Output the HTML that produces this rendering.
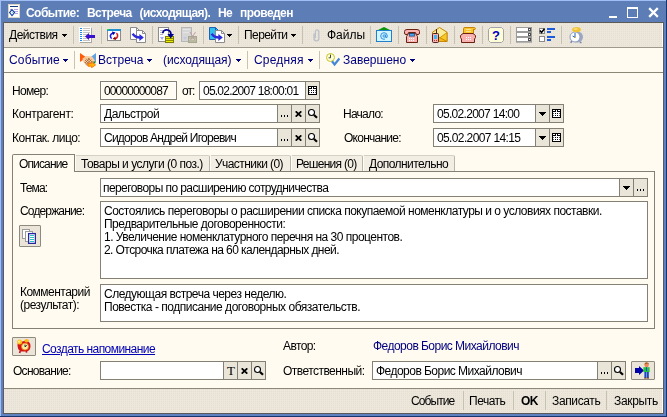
<!DOCTYPE html>
<html><head><meta charset="utf-8">
<style>
*{box-sizing:border-box;margin:0;padding:0}
html,body{width:667px;height:417px;overflow:hidden;background:#5c7fc0}
body{position:relative;font-family:"Liberation Sans",sans-serif;font-size:11px;color:#000;line-height:13px}
.a{position:absolute;white-space:nowrap}
.t{font-size:12px;line-height:13px;letter-spacing:-0.5px;will-change:transform}
.blue{color:#000080}
.fld{border:1px solid #848074}
.btn{background:#eae5d9;border:1px solid #848074;width:15px}
.sep{width:1px;height:18px;background:#c6c2b2}
.arr{width:0;height:0;border-left:3px solid transparent;border-right:3px solid transparent;border-top:3px solid #000}
.hl{height:1px}
.dith{background:#eae4d9 conic-gradient(#e4ded3 25%,#ece6db 0) 0 0/2px 2px}
</style></head><body>
<div class="a" style="left:0;top:0;width:667px;height:417px;background:#5e81c0"></div>
<div class="a" style="left:1px;top:22px;width:2px;height:392px;background:#5e80c2"></div>
<div class="a" style="left:1px;top:1px;width:665px;height:21px;background:#5c7db5"></div>
<div class="a" style="left:0;top:0;width:667px;height:1px;background:#a0bef5"></div>
<div class="a" style="left:0;top:0;width:1px;height:417px;background:#a0bef5"></div>
<div class="a" style="left:666px;top:0;width:1px;height:417px;background:#17356f"></div>
<div class="a" style="left:0;top:416px;width:667px;height:1px;background:#17356f"></div>
<div class="a" style="left:3px;top:22px;width:661px;height:392px;background:#5a5a58"></div>
<div class="a" style="left:26px;top:6px;font-weight:bold;font-size:12px;color:#fff;line-height:15px;letter-spacing:-0.55px;word-spacing:5px;will-change:transform">Событие: Встреча (исходящая). Не проведен</div>
<div class="a dith" style="left:4px;top:23px;width:659px;height:24px"></div>
<div class="a hl" style="left:4px;top:47px;width:659px;background:#9d9a8c"></div>
<div class="a" style="left:4px;top:48px;width:659px;height:24px;background:#fffbf0"></div>
<div class="a hl" style="left:4px;top:72px;width:659px;background:#8c8878"></div>
<div class="a" style="left:4px;top:73px;width:659px;height:315px;background:#fffbf0"></div>
<div class="a hl" style="left:4px;top:388px;width:659px;background:#8c8878"></div>
<div class="a dith" style="left:4px;top:389px;width:659px;height:24px"></div>
<div class="a" style="left:662px;top:23px;width:1px;height:390px;background:#fff"></div>
<div class="a hl" style="left:4px;top:47px;width:659px;background:#9d9a8c"></div>
<div class="a hl" style="left:4px;top:72px;width:659px;background:#8c8878"></div>
<div class="a hl" style="left:4px;top:388px;width:659px;background:#8c8878"></div>
<svg class="a" style="left:8px;top:4px" width="12" height="14" viewBox="0 0 12 14" shape-rendering="crispEdges"><rect x="0" y="0" width="12" height="14" fill="#dcd4c4"/><rect x="1" y="1" width="10" height="12" fill="#fff"/><rect x="2" y="2" width="8" height="1" fill="#104080"/><rect x="6" y="5" width="4" height="1" fill="#b0a0e0"/><rect x="6" y="7" width="4" height="1" fill="#b0a0e0"/><rect x="7" y="9" width="3" height="1" fill="#b0a0e0"/><rect x="2" y="5" width="2" height="1" fill="#b0a0e0"/><path d="M4 5.6L6.6 8.6L4 11.6L1.6 8.6Z" fill="#fff" stroke="#1040a0" stroke-width="1.1" shape-rendering="geometricPrecision"/><rect x="4" y="8" width="1" height="1" fill="#60d0f0"/></svg>
<svg class="a" style="left:609px;top:16px" width="8" height="2" viewBox="0 0 8 2" shape-rendering="crispEdges"><rect x="0" y="0" width="8" height="2" fill="#fff"/></svg>
<svg class="a" style="left:627px;top:7px" width="11" height="11" viewBox="0 0 11 11" shape-rendering="crispEdges"><path d="M0 0h11v11h-11zM1 2v8h9v-8z" fill="#fff" fill-rule="evenodd"/></svg>
<svg class="a" style="left:648px;top:7px" width="11" height="11" viewBox="0 0 11 11"><path d="M2 2L9 9M9 2L2 9" stroke="#fff" stroke-width="2.3" stroke-linecap="square" fill="none"/></svg>
<div class="a t " style="left:9px;top:29px;letter-spacing:-0.5px;">Действия</div>
<svg class="a" style="left:62px;top:34px" width="5" height="3" viewBox="0 0 5 3" shape-rendering="crispEdges"><path d="M0 0h5v1h-5zM1 1h3v1h-3zM2 2h1v1h-1z" fill="#000"/></svg>
<div class="a sep" style="left:73px;top:26px"></div>
<div class="a sep" style="left:101px;top:26px"></div>
<div class="a sep" style="left:152px;top:26px"></div>
<div class="a sep" style="left:203px;top:26px"></div>
<div class="a sep" style="left:238px;top:26px"></div>
<div class="a sep" style="left:302px;top:26px"></div>
<div class="a sep" style="left:370px;top:26px"></div>
<div class="a sep" style="left:398px;top:26px"></div>
<div class="a sep" style="left:426px;top:26px"></div>
<div class="a sep" style="left:454px;top:26px"></div>
<div class="a sep" style="left:482px;top:26px"></div>
<div class="a sep" style="left:510px;top:26px"></div>
<div class="a sep" style="left:561px;top:26px"></div>
<svg class="a" style="left:79px;top:27px" width="17" height="16" viewBox="0 0 17 16" shape-rendering="crispEdges"><rect x="1" y="1" width="12" height="15" fill="#a8a8a0"/><rect x="0" y="0" width="12" height="15" fill="#fff"/><rect x="1" y="1" width="2" height="1" fill="#2090e8"/><rect x="4" y="1" width="7" height="1" fill="#c4c4c4"/><rect x="1" y="3" width="2" height="1" fill="#2090e8"/><rect x="4" y="3" width="7" height="1" fill="#c4c4c4"/><rect x="1" y="5" width="2" height="1" fill="#2090e8"/><rect x="4" y="5" width="7" height="1" fill="#c4c4c4"/><rect x="1" y="7" width="2" height="1" fill="#2090e8"/><rect x="4" y="7" width="7" height="1" fill="#c4c4c4"/><rect x="1" y="9" width="2" height="1" fill="#2090e8"/><rect x="4" y="9" width="7" height="1" fill="#c4c4c4"/><rect x="1" y="11" width="2" height="1" fill="#2090e8"/><rect x="4" y="11" width="7" height="1" fill="#c4c4c4"/><rect x="1" y="13" width="2" height="1" fill="#2090e8"/><rect x="4" y="13" width="7" height="1" fill="#c4c4c4"/><path d="M6 9.5L10 6V8H16V11H10V13Z" fill="#3a10d0" shape-rendering="geometricPrecision"/></svg>
<svg class="a" style="left:107px;top:29px" width="14" height="12" viewBox="0 0 14 12" shape-rendering="crispEdges"><rect x="0" y="0" width="14" height="12" fill="#8c8c8c"/><rect x="1" y="1" width="12" height="10" fill="#fff"/><rect x="0" y="0" width="14" height="2" fill="#2090d0"/><rect x="0" y="0" width="2" height="1" fill="#20e020"/><g shape-rendering="geometricPrecision"><path d="M4.6 9.6C2.6 8 3 4.8 6 4" stroke="#1818e8" stroke-width="1.6" fill="none"/><path d="M5 2.6L8.6 3.4L6 6.2Z" fill="#0000a0"/><path d="M9.4 4.2C11.4 5.8 11 8.8 8 9.8" stroke="#d02020" stroke-width="1.6" fill="none"/><path d="M9 11L5.6 10L8.2 7.6Z" fill="#800000"/></g></svg>
<svg class="a" style="left:130px;top:27px" width="16" height="16" viewBox="0 0 16 16"><path d="M0.5 0.5H6.5L9.5 3.5V12.5H0.5Z" fill="#fff" stroke="#8c8c8c"/><path d="M6.5 0.5V3.5H9.5" fill="none" stroke="#8c8c8c"/><path d="M6.5 3.5H12.5L15.5 6.5V15.5H6.5Z" fill="#fff" stroke="#8c8c8c"/><path d="M12.5 3.5V6.5H15.5" fill="none" stroke="#8c8c8c"/><path d="M2.6 6.8C4.5 9.5 6 10.5 10 10.5" stroke="#2c2cd8" stroke-width="2.4" fill="none"/><path d="M9.4 7L13.8 10.5L9.4 14Z" fill="#2c2cd8"/></svg>
<svg class="a" style="left:158px;top:27px" width="17" height="16" viewBox="0 0 17 16"><rect x="0.5" y="0.5" width="10" height="14" fill="#fff" stroke="#8c8c8c"/><rect x="2" y="3" width="4" height="1" fill="#b8b8b8"/><rect x="2" y="5" width="4" height="1" fill="#b8b8b8"/><rect x="2" y="7" width="3" height="1" fill="#b8b8b8"/><path d="M2 10H6L4 13Z" fill="#a8a8ff"/><rect x="7.5" y="9.5" width="8" height="6" fill="#ecec00" stroke="#7c7c00"/><rect x="8" y="11" width="7" height="1" fill="#8c8c00"/><rect x="8" y="13" width="7" height="1" fill="#8c8c00"/><path d="M4.8 6.2C5 2 12.4 1.2 13 7.4" stroke="#000090" stroke-width="1.8" fill="none"/><path d="M9.4 7H16L12.7 11.4Z" fill="#000090"/></svg>
<svg class="a" style="left:181px;top:27px" width="17" height="16" viewBox="0 0 17 16"><rect x="0.5" y="0.5" width="10" height="14" fill="#d6d6d6" stroke="#b6b6b6"/><rect x="2" y="2" width="7" height="1" fill="#e4e4e4"/><rect x="2" y="5" width="6" height="1" fill="#e4e4e4"/><path d="M2 10H6L4 13Z" fill="#c4c8e0"/><rect x="7.5" y="9.5" width="8" height="6" fill="#babaa2" stroke="#a8a890"/><rect x="8" y="12" width="7" height="1" fill="#cfcfba"/><path d="M9 5L14 13M14.5 5L9.5 13" stroke="#b89aa0" stroke-width="0.9" fill="none"/></svg>
<svg class="a" style="left:209px;top:27px" width="16" height="16" viewBox="0 0 16 16"><path d="M0.5 0.5H6.5L9.5 3.5V12.5H0.5Z" fill="#30c0f0" stroke="#2060b0"/><path d="M6.5 0.5V3.5H9.5" fill="none" stroke="#2060b0"/><path d="M6.5 3.5H12.5L15.5 6.5V15.5H6.5Z" fill="#fff" stroke="#8c8c8c"/><path d="M12.5 3.5V6.5H15.5" fill="none" stroke="#8c8c8c"/><path d="M2.6 6.8C4.5 9.5 6 10.5 10 10.5" stroke="#2c2cd8" stroke-width="2.4" fill="none"/><path d="M9.4 7L13.8 10.5L9.4 14Z" fill="#2c2cd8"/></svg>
<svg class="a" style="left:227px;top:34px" width="5" height="3" viewBox="0 0 5 3" shape-rendering="crispEdges"><path d="M0 0h5v1h-5zM1 1h3v1h-3zM2 2h1v1h-1z" fill="#000"/></svg>
<div class="a t " style="left:244px;top:29px;letter-spacing:-0.58px;">Перейти</div>
<svg class="a" style="left:291px;top:34px" width="5" height="3" viewBox="0 0 5 3" shape-rendering="crispEdges"><path d="M0 0h5v1h-5zM1 1h3v1h-3zM2 2h1v1h-1z" fill="#000"/></svg>
<svg class="a" style="left:313px;top:29px" width="7" height="13" viewBox="0 0 7 13"><path d="M1 4.5V9.5a2.4 2.4 0 0 0 4.8 0V2.6a1.7 1.7 0 0 0 -3.4 0V9.2" stroke="#bcc0ca" stroke-width="1.3" fill="none"/></svg>
<div class="a t " style="left:327px;top:29px;letter-spacing:0.0px;">Файлы</div>
<svg class="a" style="left:376px;top:27px" width="16" height="15" viewBox="0 0 16 15"><path d="M1 3.6L8 0L15 3.6Z" fill="#0c940c"/><rect x="0.5" y="3.5" width="15" height="11" fill="#d2f5ff" stroke="#2080d0"/><circle cx="8" cy="9" r="3.3" fill="none" stroke="#3090e0" stroke-width="1"/><circle cx="8.2" cy="9" r="1.2" fill="none" stroke="#3090e0" stroke-width="1"/><path d="M9.6 7.6V10.4H11" stroke="#3090e0" fill="none"/><rect x="9" y="11" width="3" height="2" fill="#d2f5ff"/></svg>
<svg class="a" style="left:404px;top:29px" width="16" height="14" viewBox="0 0 16 14"><path d="M2.5 13.5V7.5L4.5 4.5H11.5L13.5 7.5V13.5Z" fill="#f8b2b2" stroke="#6c2010"/><path d="M0.5 4V2.5Q0.5 0.5 3 0.5H13Q15.5 0.5 15.5 2.5V4Q15.5 5.5 14 5.5H12.5L11.5 3.5H4.5L3.5 5.5H2Q0.5 5.5 0.5 4Z" fill="#f8b2b2" stroke="#6c2010"/><rect x="5.5" y="4.5" width="5" height="2.6" fill="#48a8f4" stroke="#204878" stroke-width="0.8"/><rect x="5" y="9" width="1" height="1" fill="#fff"/><rect x="5" y="11" width="1" height="1" fill="#fff"/><rect x="7" y="9" width="1" height="1" fill="#fff"/><rect x="7" y="11" width="1" height="1" fill="#fff"/><rect x="9" y="9" width="1" height="1" fill="#fff"/><rect x="9" y="11" width="1" height="1" fill="#fff"/></svg>
<svg class="a" style="left:432px;top:27px" width="16" height="16" viewBox="0 0 16 16"><path d="M0.5 5.2L7.5 0.5L15 5.2V14.5H0.5Z" fill="#f8ec98" stroke="#c48400"/><path d="M15 5.5L7.5 11L15 14.5Z" fill="#f8c828" stroke="#c48400" stroke-width="0.8"/><path d="M0.5 14.5L7.5 10.6L15 14.5Z" fill="#f8b818" stroke="#c48400" stroke-width="0.8"/><rect x="4" y="2" width="1" height="5" fill="#502020"/><rect x="0.5" y="6.5" width="6" height="9" rx="1" fill="#f8b2b2" stroke="#502020"/><rect x="2" y="8" width="3" height="4" fill="#40b4f8"/><rect x="2" y="13" width="1" height="1" fill="#a04040"/><rect x="4" y="13" width="1" height="1" fill="#a04040"/></svg>
<svg class="a" style="left:460px;top:27px" width="17" height="16" viewBox="0 0 17 16"><path d="M3.5 6.5V1.5Q3.5 0.5 5 0.5H14.5Q16 1 15 2.5Q14 3 13.5 2V6.5Z" fill="#f8c432" stroke="#c48400"/><rect x="6" y="2" width="5" height="1" fill="#fbe28a"/><rect x="6" y="4" width="5" height="1" fill="#fbe28a"/><path d="M1.5 15.5V12L0.5 10.5V8.5L3 6.5H13L15.5 8.5V10.5L14.5 12V15.5Z" fill="#f8b2b2" stroke="#6c2010"/><rect x="6" y="10" width="1" height="1" fill="#fff"/><rect x="6" y="12" width="1" height="1" fill="#fff"/><rect x="8" y="10" width="1" height="1" fill="#fff"/><rect x="8" y="12" width="1" height="1" fill="#fff"/><rect x="10" y="10" width="1" height="1" fill="#fff"/><rect x="10" y="12" width="1" height="1" fill="#fff"/></svg>
<svg class="a" style="left:488px;top:27px" width="16" height="16" viewBox="0 0 16 16"><path d="M2.5 0.5H13.5L15.5 2.5V13.5L13.5 15.5H2.5L0.5 13.5V2.5Z" fill="#fffdd6" stroke="#a2a2aa"/><text x="8" y="13" text-anchor="middle" font-family="Liberation Sans, sans-serif" font-weight="bold" font-size="13" fill="#0000c0">?</text></svg>
<svg class="a" style="left:516px;top:27px" width="16" height="16" viewBox="0 0 16 16" shape-rendering="crispEdges"><rect x="0" y="0" width="16" height="5" fill="#9c9c9c"/><rect x="1" y="1" width="11" height="3" fill="#fff"/><rect x="12" y="1" width="3" height="3" fill="#505050"/><rect x="13" y="2" width="1" height="1" fill="#fff"/><rect x="0" y="5" width="16" height="5" fill="#9c9c9c"/><rect x="1" y="6" width="11" height="3" fill="#fff"/><rect x="12" y="6" width="3" height="3" fill="#505050"/><rect x="13" y="7" width="1" height="1" fill="#fff"/><rect x="0" y="10" width="16" height="5" fill="#9c9c9c"/><rect x="1" y="11" width="11" height="3" fill="#fff"/><rect x="12" y="11" width="3" height="3" fill="#505050"/><rect x="13" y="12" width="1" height="1" fill="#fff"/><rect x="0" y="15" width="16" height="1" fill="#b4b4b4"/></svg>
<svg class="a" style="left:539px;top:28px" width="16" height="14" viewBox="0 0 16 14" shape-rendering="crispEdges"><rect x="0" y="0" width="6" height="6" fill="#8a8a8a"/><rect x="1" y="1" width="4" height="4" fill="#fff"/><rect x="0" y="8" width="6" height="6" fill="#8a8a8a"/><rect x="1" y="9" width="4" height="4" fill="#fff"/><path d="M1 2.5L2.5 4.5L5.5 0.8" stroke="#000" stroke-width="1.5" fill="none" shape-rendering="geometricPrecision"/><rect x="8" y="0" width="8" height="2" fill="#1c5cdc"/><rect x="8" y="3" width="4" height="2" fill="#1c5cdc"/><rect x="8" y="8" width="8" height="2" fill="#1c5cdc"/><rect x="8" y="11" width="4" height="2" fill="#1c5cdc"/></svg>
<svg class="a" style="left:569px;top:27px" width="15" height="17" viewBox="0 0 15 17"><ellipse cx="8.5" cy="10" rx="5.5" ry="5.6" fill="#9aa8c4"/><path d="M3 14L1.6 15.8M11 15L12.4 16" stroke="#7080a8" stroke-width="1.4"/><circle cx="6" cy="10" r="5" fill="#fff" stroke="#8c9cc0" stroke-width="1"/><path d="M6 6V10.4L3.6 9" stroke="#2060c0" stroke-width="1" fill="none"/><rect x="5.5" y="9.8" width="1.2" height="1.2" fill="#e0b020"/><ellipse cx="7.5" cy="2.6" rx="4.4" ry="2.6" fill="#f0c436"/><ellipse cx="6.6" cy="2" rx="2" ry="1" fill="#f8dc78"/></svg>
<div class="a t blue" style="left:9px;top:54px;letter-spacing:0.17px">Событие</div>
<svg class="a" style="left:63px;top:59px" width="5" height="3" viewBox="0 0 5 3" shape-rendering="crispEdges"><path d="M0 0h5v1h-5zM1 1h3v1h-3zM2 2h1v1h-1z" fill="#00007c"/></svg>
<div class="a sep" style="left:74px;top:51px;background:#c8c4b0"></div>
<div class="a sep" style="left:247px;top:51px;background:#c8c4b0"></div>
<div class="a sep" style="left:319px;top:51px;background:#c8c4b0"></div>
<svg class="a" style="left:80px;top:53px" width="16" height="15" viewBox="0 0 16 15"><path d="M0 0L6.5 4.5L0 9Z" fill="#ff5a08"/><path d="M16 0L10 4.5L16 9.5Z" fill="#62a2e2"/><path d="M2.5 5.5L6.5 3L12 3.6L15 7.5L13 11L9 14.2L6 12.2L3 8.5Z" fill="#f8cc9c"/><path d="M5 7L9 11M6 5.6L10.6 10.2M8 5L12 9M4.6 9L8.4 12.8M5 10L9.6 5.4M6.4 11.4L11.4 6.4M8 12.6L12.6 8" stroke="#9a5828" stroke-width="0.7" fill="none"/><path d="M8.2 10.6H11.6V9L15.6 11.9L11.6 14.8V13.2H8.2Z" fill="#ffb400" stroke="#ff6a00" stroke-width="0.8"/><rect x="13.4" y="8.4" width="2" height="2" fill="#208020"/></svg>
<div class="a t blue" style="left:98px;top:54px;letter-spacing:0.0px;">Встреча</div>
<svg class="a" style="left:147px;top:59px" width="5" height="3" viewBox="0 0 5 3" shape-rendering="crispEdges"><path d="M0 0h5v1h-5zM1 1h3v1h-3zM2 2h1v1h-1z" fill="#00007c"/></svg>
<div class="a t blue" style="left:163px;top:54px;letter-spacing:-0.1px;">(исходящая)</div>
<svg class="a" style="left:236px;top:59px" width="5" height="3" viewBox="0 0 5 3" shape-rendering="crispEdges"><path d="M0 0h5v1h-5zM1 1h3v1h-3zM2 2h1v1h-1z" fill="#00007c"/></svg>
<div class="a t blue" style="left:254px;top:54px;letter-spacing:0.17px;">Средняя</div>
<svg class="a" style="left:308px;top:59px" width="5" height="3" viewBox="0 0 5 3" shape-rendering="crispEdges"><path d="M0 0h5v1h-5zM1 1h3v1h-3zM2 2h1v1h-1z" fill="#00007c"/></svg>
<svg class="a" style="left:326px;top:53px" width="14" height="14" viewBox="0 0 14 14"><circle cx="4.5" cy="4.5" r="4" fill="#ffffd4" stroke="#c4c428" stroke-width="1"/><path d="M4.5 1.6V4.8H2.6" stroke="#404040" stroke-width="1" fill="none"/><path d="M6 8.2L8.6 11.4L13.4 5.4" stroke="#4686d6" stroke-width="2.2" fill="none"/></svg>
<div class="a t blue" style="left:343px;top:54px;letter-spacing:0.0px;">Завершено</div>
<svg class="a" style="left:410px;top:59px" width="5" height="3" viewBox="0 0 5 3" shape-rendering="crispEdges"><path d="M0 0h5v1h-5zM1 1h3v1h-3zM2 2h1v1h-1z" fill="#00007c"/></svg>
<div class="a t " style="left:12px;top:85px;letter-spacing:-0.7px;">Номер:</div>
<div class="a t " style="left:12px;top:108px;letter-spacing:-0.35px;">Контрагент:</div>
<div class="a t " style="left:12px;top:132px;letter-spacing:-0.5px;">Контак. лицо:</div>
<div class="a fld" style="left:100px;top:81px;width:77px;height:19px;background:#fffbf0"><div class="a" style="left:0;top:0;right:0;bottom:0;border:1px solid #fff"></div></div>
<div class="a t " style="left:104px;top:85px;letter-spacing:-0.88px;">00000000087</div>
<div class="a t " style="left:182px;top:85px;letter-spacing:-1px">от:</div>
<div class="a fld" style="left:199px;top:81px;width:121px;height:19px;background:#fff"></div>
<div class="a t " style="left:203px;top:85px;letter-spacing:-0.78px;">05.02.2007 18:00:01</div>
<div class="a btn" style="left:305px;top:81px;height:19px"><svg class="a" style="left:2px;top:4px" width="9" height="9" viewBox="0 0 9 9" shape-rendering="crispEdges"><rect width="9" height="9" fill="#000"/><rect x="1" y="3" width="7" height="5" fill="#fff"/><path d="M1 1h2v1h-2zM4 1h1v2h-1zM6 1h2v1h-2z" fill="#fff"/><path d="M3 4h1v1h-1zM5 4h1v1h-1zM3 6h1v1h-1zM5 6h1v1h-1z" fill="#000"/><path d="M1 4h1v1h-1zM7 4h1v1h-1zM1 6h1v1h-1zM7 6h1v1h-1z" fill="#666"/></svg></div>
<div class="a fld" style="left:100px;top:104px;width:220px;height:19px;background:#fff"></div>
<div class="a t " style="left:104px;top:108px;letter-spacing:-0.5px;">Дальстрой</div>
<div class="a btn" style="left:277px;top:104px;height:19px"><div class="a" style="left:3px;top:10px;width:1px;height:2px;background:#000;box-shadow:3px 0 #000,6px 0 #000"></div></div>
<div class="a btn" style="left:291px;top:104px;height:19px"><svg class="a" style="left:3px;top:6px" width="7" height="6" viewBox="0 0 7 6"><path d="M0.7 0.3L6.3 5.7M6.3 0.3L0.7 5.7" stroke="#000" stroke-width="1.7" fill="none"/></svg></div>
<div class="a btn" style="left:305px;top:104px;height:19px"><svg class="a" style="left:1px;top:3px" width="12" height="12" viewBox="0 0 12 12"><circle cx="4.5" cy="4.5" r="3" stroke="#000" stroke-width="1.1" fill="#fff"/><path d="M7 7L10 9.7" stroke="#000" stroke-width="2.2" fill="none"/></svg></div>
<div class="a fld" style="left:100px;top:128px;width:220px;height:19px;background:#fff"></div>
<div class="a t " style="left:104px;top:132px;letter-spacing:-0.75px;">Сидоров Андрей Игоревич</div>
<div class="a btn" style="left:277px;top:128px;height:19px"><div class="a" style="left:3px;top:10px;width:1px;height:2px;background:#000;box-shadow:3px 0 #000,6px 0 #000"></div></div>
<div class="a btn" style="left:291px;top:128px;height:19px"><svg class="a" style="left:3px;top:6px" width="7" height="6" viewBox="0 0 7 6"><path d="M0.7 0.3L6.3 5.7M6.3 0.3L0.7 5.7" stroke="#000" stroke-width="1.7" fill="none"/></svg></div>
<div class="a btn" style="left:305px;top:128px;height:19px"><svg class="a" style="left:1px;top:3px" width="12" height="12" viewBox="0 0 12 12"><circle cx="4.5" cy="4.5" r="3" stroke="#000" stroke-width="1.1" fill="#fff"/><path d="M7 7L10 9.7" stroke="#000" stroke-width="2.2" fill="none"/></svg></div>
<div class="a t " style="left:343px;top:108px;letter-spacing:-0.75px;">Начало:</div>
<div class="a t " style="left:344px;top:132px;letter-spacing:-0.75px;">Окончание:</div>
<div class="a fld" style="left:433px;top:104px;width:131px;height:19px;background:#fff"></div>
<div class="a t " style="left:437px;top:108px;letter-spacing:-0.7px;">05.02.2007 14:00</div>
<div class="a btn" style="left:535px;top:104px;height:19px"><svg class="a" style="left:3px;top:7px" width="7" height="4" viewBox="0 0 7 4" shape-rendering="crispEdges"><path d="M0 0h7v1h-7zM1 1h5v1h-5zM2 2h3v1h-3zM3 3h1v1h-1z" fill="#000"/></svg></div>
<div class="a btn" style="left:549px;top:104px;height:19px"><svg class="a" style="left:2px;top:4px" width="9" height="9" viewBox="0 0 9 9" shape-rendering="crispEdges"><rect width="9" height="9" fill="#000"/><rect x="1" y="3" width="7" height="5" fill="#fff"/><path d="M1 1h2v1h-2zM4 1h1v2h-1zM6 1h2v1h-2z" fill="#fff"/><path d="M3 4h1v1h-1zM5 4h1v1h-1zM3 6h1v1h-1zM5 6h1v1h-1z" fill="#000"/><path d="M1 4h1v1h-1zM7 4h1v1h-1zM1 6h1v1h-1zM7 6h1v1h-1z" fill="#666"/></svg></div>
<div class="a fld" style="left:433px;top:128px;width:131px;height:19px;background:#fff"></div>
<div class="a t " style="left:437px;top:132px;letter-spacing:-0.63px;">05.02.2007 14:15</div>
<div class="a btn" style="left:535px;top:128px;height:19px"><svg class="a" style="left:3px;top:7px" width="7" height="4" viewBox="0 0 7 4" shape-rendering="crispEdges"><path d="M0 0h7v1h-7zM1 1h5v1h-5zM2 2h3v1h-3zM3 3h1v1h-1z" fill="#000"/></svg></div>
<div class="a btn" style="left:549px;top:128px;height:19px"><svg class="a" style="left:2px;top:4px" width="9" height="9" viewBox="0 0 9 9" shape-rendering="crispEdges"><rect width="9" height="9" fill="#000"/><rect x="1" y="3" width="7" height="5" fill="#fff"/><path d="M1 1h2v1h-2zM4 1h1v2h-1zM6 1h2v1h-2z" fill="#fff"/><path d="M3 4h1v1h-1zM5 4h1v1h-1zM3 6h1v1h-1zM5 6h1v1h-1z" fill="#000"/><path d="M1 4h1v1h-1zM7 4h1v1h-1zM1 6h1v1h-1zM7 6h1v1h-1z" fill="#666"/></svg></div>
<div class="a" style="left:12px;top:171px;width:643px;height:158px;border:1px solid #848074;background:#fffbf0"></div>
<div class="a" style="left:75px;top:155px;width:135px;height:16px;border-top:1px solid #d4d0c4;border-right:1px solid #bab6a9;border-left:1px solid #fffdf8;background:#f3eee4;border-radius:0 2px 0 0"></div>
<div class="a t " style="left:81px;top:158px;letter-spacing:-0.5px;">Товары и услуги (0 поз.)</div>
<div class="a" style="left:210px;top:155px;width:81px;height:16px;border-top:1px solid #d4d0c4;border-right:1px solid #bab6a9;border-left:1px solid #fffdf8;background:#f3eee4;border-radius:0 2px 0 0"></div>
<div class="a t " style="left:215px;top:158px;letter-spacing:-0.56px;">Участники (0)</div>
<div class="a" style="left:291px;top:155px;width:72px;height:16px;border-top:1px solid #d4d0c4;border-right:1px solid #bab6a9;border-left:1px solid #fffdf8;background:#f3eee4;border-radius:0 2px 0 0"></div>
<div class="a t " style="left:296px;top:158px;letter-spacing:-0.7px;">Решения (0)</div>
<div class="a" style="left:363px;top:155px;width:92px;height:16px;border-top:1px solid #d4d0c4;border-right:1px solid #bab6a9;border-left:1px solid #fffdf8;background:#f3eee4;border-radius:0 2px 0 0"></div>
<div class="a t " style="left:369px;top:158px;letter-spacing:-0.56px;">Дополнительно</div>
<div class="a" style="left:12px;top:154px;width:63px;height:18px;border:1px solid #848074;border-bottom:none;background:#fffbf0;border-radius:2px 0 0 0"></div>
<div class="a t " style="left:19px;top:158px;letter-spacing:-0.86px;">Описание</div>
<div class="a t " style="left:20px;top:182px;letter-spacing:-0.88px;">Тема:</div>
<div class="a fld" style="left:100px;top:178px;width:548px;height:19px;background:#fff"></div>
<div class="a t " style="left:103px;top:182px;letter-spacing:-0.58px;">переговоры по расширению сотрудничества</div>
<div class="a btn" style="left:619px;top:178px;height:19px"><svg class="a" style="left:3px;top:7px" width="7" height="4" viewBox="0 0 7 4" shape-rendering="crispEdges"><path d="M0 0h7v1h-7zM1 1h5v1h-5zM2 2h3v1h-3zM3 3h1v1h-1z" fill="#000"/></svg></div>
<div class="a btn" style="left:633px;top:178px;height:19px"><div class="a" style="left:3px;top:10px;width:1px;height:2px;background:#000;box-shadow:3px 0 #000,6px 0 #000"></div></div>
<div class="a t " style="left:20px;top:205px;letter-spacing:-0.85px;">Содержание:</div>
<div class="a fld" style="left:100px;top:201px;width:548px;height:78px;background:#fff"></div>
<div class="a t " style="left:104px;top:205px;letter-spacing:-0.5px;">Состоялись переговоры о расширении списка покупаемой номенклатуры и о условиях поставки.</div>
<div class="a t " style="left:104px;top:218px;letter-spacing:-0.52px;">Предварительные договоренности:</div>
<div class="a t " style="left:104px;top:231px;letter-spacing:-0.51px;">1. Увеличение номенклатурного перечня на 30 процентов.</div>
<div class="a t " style="left:104px;top:244px;letter-spacing:-0.58px;">2. Отсрочка платежа на 60 календарных дней.</div>
<div class="a" style="left:19px;top:225px;width:22px;height:22px;border:1px solid #8e8b7e;border-radius:1px;background:#eae4d9"></div>
<svg class="a" style="left:22px;top:229px" width="14" height="15" viewBox="0 0 14 15"><rect x="0.5" y="0.5" width="7" height="9" fill="#fff" stroke="#9c9c9c"/><rect x="3.5" y="2.5" width="7" height="10" fill="#fff" stroke="#9c9c9c"/><rect x="6.6" y="4.6" width="6.8" height="9.8" fill="#fff" stroke="#2828a0" stroke-width="1.3"/><rect x="8" y="6" width="4" height="1" fill="#30c0c0"/><rect x="8" y="8" width="4" height="1" fill="#30c0c0"/><rect x="8" y="10" width="4" height="1" fill="#30c0c0"/><rect x="8" y="12" width="4" height="1" fill="#30c0c0"/></svg>
<div class="a t " style="left:20px;top:286px;letter-spacing:-0.52px;">Комментарий</div>
<div class="a t " style="left:20px;top:299px;letter-spacing:-0.5px;">(результат):</div>
<div class="a fld" style="left:100px;top:284px;width:548px;height:38px;background:#fff"></div>
<div class="a t " style="left:104px;top:288px;letter-spacing:-0.5px;">Следующая встреча через неделю.</div>
<div class="a t " style="left:104px;top:301px;letter-spacing:-0.48px;">Повестка - подписание договорных обязательств.</div>
<div class="a" style="left:12px;top:337px;width:24px;height:19px;border:1px solid #8e8b7e;border-radius:1px;background:#eae4d9"></div>
<svg class="a" style="left:17px;top:339px" width="14" height="15" viewBox="0 0 14 15"><path d="M3.2 12L2.6 14M9.4 12L9.6 13.6" stroke="#c01010" stroke-width="1.6"/><path d="M0.5 6Q0.5 3 3.5 3L9 1.5Q13.5 2.5 13.5 7Q13.5 12 9 12.5H4Q0.5 11 0.5 6Z" fill="#d41414"/><circle cx="2.6" cy="3" r="2.5" fill="#ffc020"/><circle cx="2.2" cy="2.6" r="1.2" fill="#fff080"/><ellipse cx="9.6" cy="1.8" rx="2.3" ry="1.8" fill="#ffb818"/><circle cx="8" cy="7.6" r="3.5" fill="#f8f0a0" stroke="#f07010" stroke-width="0.8"/><path d="M8 5.6V7.8L9.8 6.4" stroke="#202040" stroke-width="1" fill="none"/></svg>
<div class="a t " style="left:42px;top:343px;letter-spacing:-0.56px;color:#0000b4;text-decoration:underline">Создать напоминание</div>
<div class="a t " style="left:13px;top:365px;letter-spacing:-0.72px;">Основание:</div>
<div class="a fld" style="left:100px;top:361px;width:166px;height:19px;background:#fff"></div>
<div class="a btn" style="left:223px;top:361px;height:19px"><div class="a" style="left:3px;top:2px;font-family:'Liberation Serif',serif;font-weight:normal;font-size:13px;line-height:14px">T</div></div>
<div class="a btn" style="left:237px;top:361px;height:19px"><svg class="a" style="left:3px;top:6px" width="7" height="6" viewBox="0 0 7 6"><path d="M0.7 0.3L6.3 5.7M6.3 0.3L0.7 5.7" stroke="#000" stroke-width="1.7" fill="none"/></svg></div>
<div class="a btn" style="left:251px;top:361px;height:19px"><svg class="a" style="left:1px;top:3px" width="12" height="12" viewBox="0 0 12 12"><circle cx="4.5" cy="4.5" r="3" stroke="#000" stroke-width="1.1" fill="#fff"/><path d="M7 7L10 9.7" stroke="#000" stroke-width="2.2" fill="none"/></svg></div>
<div class="a t " style="left:283px;top:340px;letter-spacing:-0.6px;">Автор:</div>
<div class="a t blue" style="left:373px;top:340px;letter-spacing:-0.53px;">Федоров Борис Михайлович</div>
<div class="a t " style="left:283px;top:365px;letter-spacing:-0.54px;">Ответственный:</div>
<div class="a fld" style="left:372px;top:361px;width:254px;height:19px;background:#fff"></div>
<div class="a t " style="left:376px;top:365px;letter-spacing:-0.53px;">Федоров Борис Михайлович</div>
<div class="a btn" style="left:597px;top:361px;height:19px"><div class="a" style="left:3px;top:10px;width:1px;height:2px;background:#000;box-shadow:3px 0 #000,6px 0 #000"></div></div>
<div class="a btn" style="left:611px;top:361px;height:19px"><svg class="a" style="left:1px;top:3px" width="12" height="12" viewBox="0 0 12 12"><circle cx="4.5" cy="4.5" r="3" stroke="#000" stroke-width="1.1" fill="#fff"/><path d="M7 7L10 9.7" stroke="#000" stroke-width="2.2" fill="none"/></svg></div>
<div class="a" style="left:631px;top:361px;width:24px;height:19px;border:1px solid #8e8b7e;border-radius:1px;background:#eae4d9"></div>
<svg class="a" style="left:635px;top:362px" width="15" height="17" viewBox="0 0 15 17"><path d="M0 6H4V4L9 8.5L4 13V11H0Z" fill="#0000a8"/><path d="M8.4 5.2H14.6V10.2H8.4Z" fill="#22c244"/><rect x="11" y="5" width="1" height="4" fill="#2050c0"/><rect x="9.4" y="10" width="2" height="6" fill="#1848c8"/><rect x="11.8" y="10" width="2" height="6" fill="#1848c8"/><rect x="9.2" y="15.6" width="2.2" height="1" fill="#804010"/><rect x="11.8" y="15.6" width="2.2" height="1" fill="#804010"/><circle cx="11.6" cy="3" r="2.2" fill="#f08858"/><path d="M9.4 2.4Q9.6 0.2 11.8 0.3Q14 0.4 14 2.6L12.6 1.6Z" fill="#a06020"/></svg>
<div class="a t " style="left:411px;top:395px;letter-spacing:-0.92px;">Событие</div>
<div class="a t " style="left:469px;top:395px;letter-spacing:-0.5px;">Печать</div>
<div class="a t " style="left:521px;top:395px;font-weight:bold">OK</div>
<div class="a t " style="left:552px;top:395px;letter-spacing:-0.36px;">Записать</div>
<div class="a t " style="left:614px;top:395px;letter-spacing:-0.33px;">Закрыть</div>
<div class="a sep" style="left:463px;top:391px;height:19px"></div>
<div class="a sep" style="left:513px;top:391px;height:19px"></div>
<div class="a sep" style="left:545px;top:391px;height:19px"></div>
<div class="a sep" style="left:606px;top:391px;height:19px"></div>
</body></html>
